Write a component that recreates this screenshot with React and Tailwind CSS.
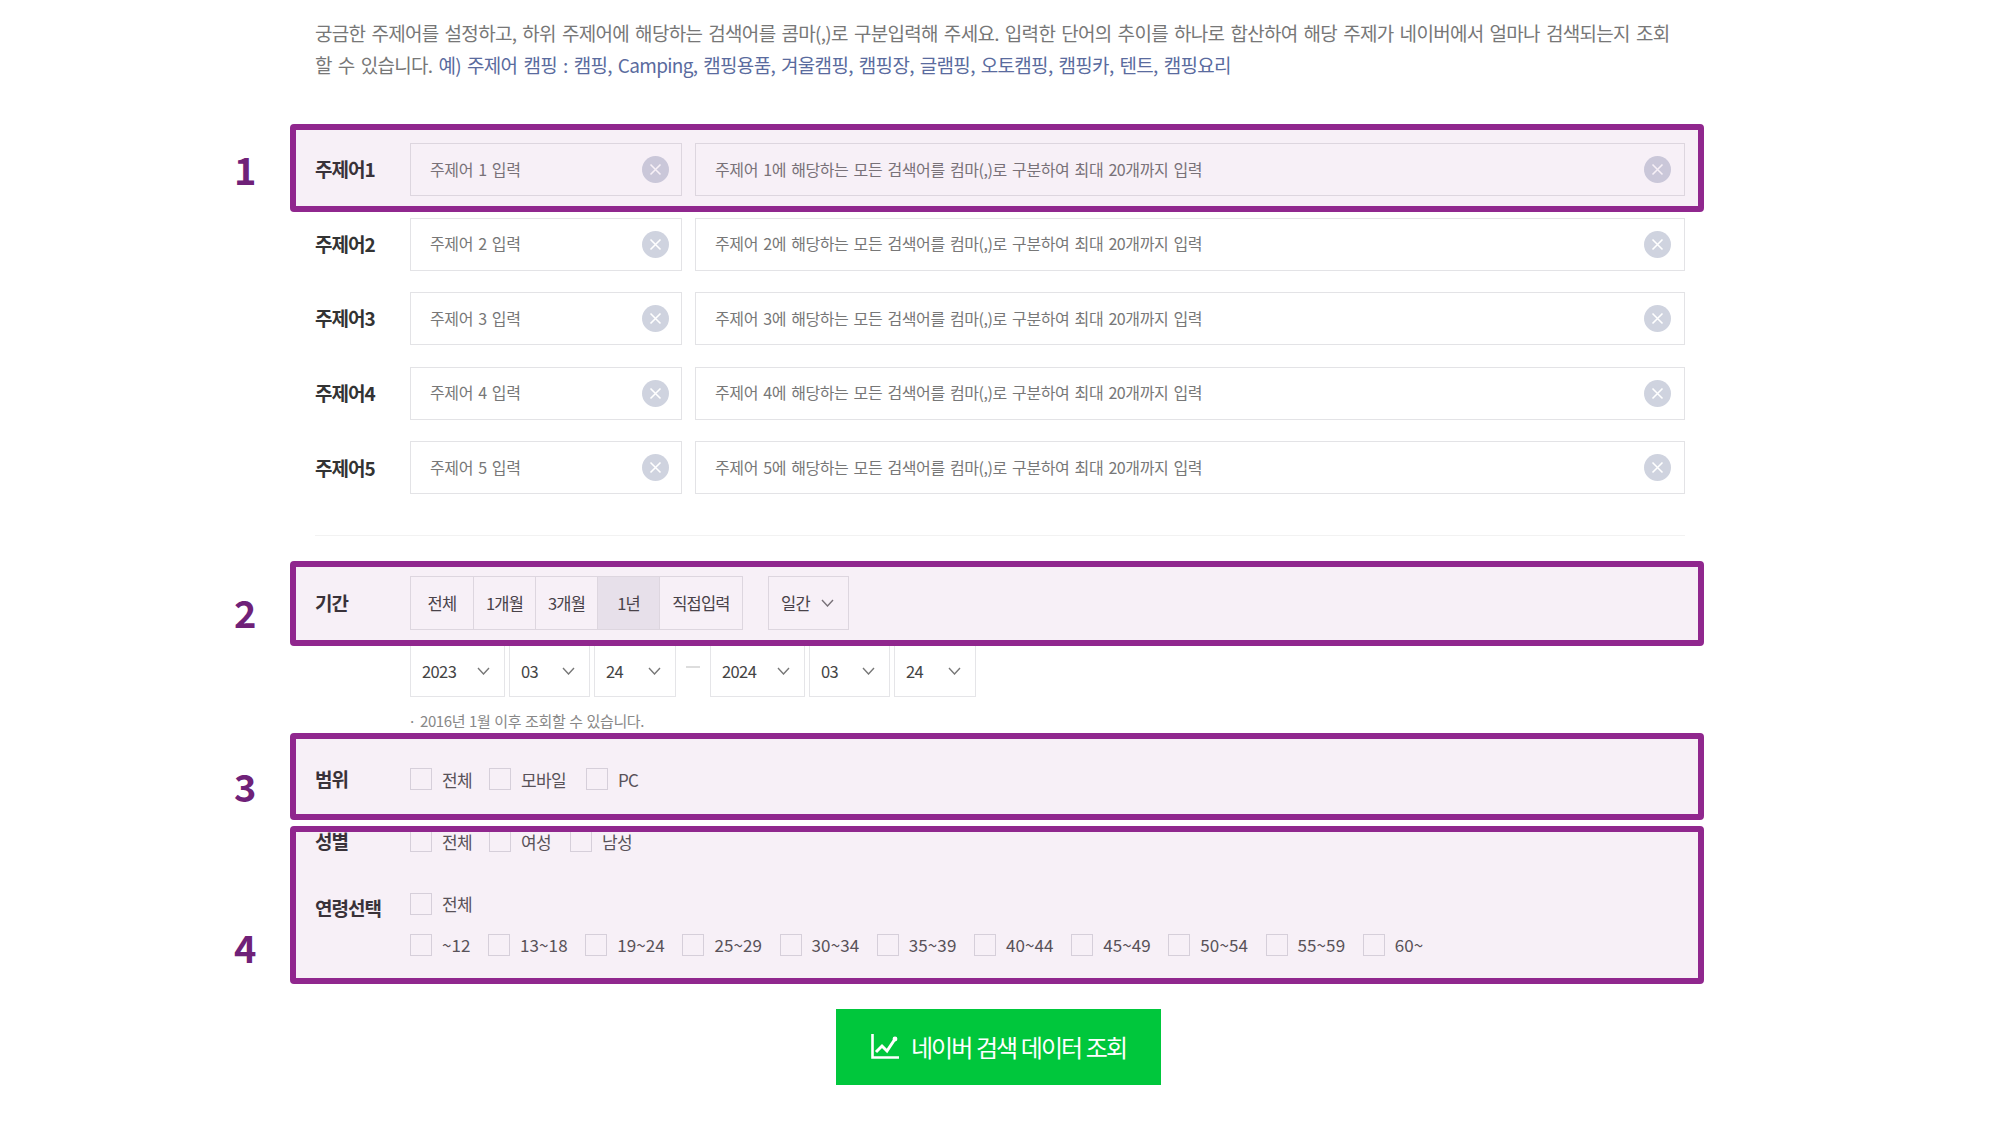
import React from 'react';

const ClearIcon = () => (
    <svg width="27" height="27" viewBox="0 0 27 27" className="shrink-0">
        <circle cx="13.5" cy="13.5" r="13.5" fill="#cfd3df" />
        <path d="M8.5 8.5l10 10M18.5 8.5l-10 10" stroke="#fff" strokeWidth="1.6" fill="none" />
    </svg>
);

const Chevron = () => (
    <svg width="13" height="8" viewBox="0 0 13 8" className="shrink-0">
        <path d="M1 1l5.5 6L12 1" stroke="#777" strokeWidth="1.4" fill="none" />
    </svg>
);

const Checkbox = ({ label, className = '', labelClass = 'tracking-[-0.7px]' }) => (
    <div className={`flex items-center ${className}`}>
        <span className="w-[22px] h-[22px] border border-[#dcdce0] bg-white/40 shrink-0"></span>
        <span className={`ml-[10px] text-[17px] text-[#555] whitespace-nowrap ${labelClass}`}>{label}</span>
    </div>
);

const Select = ({ value, width }) => (
    <div className={`h-full border border-[#e5e5e8] flex items-center justify-between pl-[11px] pr-[14px] text-[16.5px] tracking-[-0.6px] text-[#444] ${width}`}>
        <span>{value}</span>
        <Chevron />
    </div>
);

const KeywordRow = ({ n }) => (
    <div className="flex h-[53px] items-stretch">
        <div className="w-[95px] flex items-center text-[19px] font-bold tracking-[-1px] text-[#333]">주제어{n}</div>
        <div className="w-[272px] border border-[#e3e3e6] flex items-center justify-between pl-[19px] pr-[12px]">
            <span className="pb-[2px] text-[16px] tracking-[-0.4px] [word-spacing:2px] text-[#777]">주제어 {n} 입력</span>
            <ClearIcon />
        </div>
        <div className="ml-[13px] w-[990px] border border-[#e3e3e6] flex items-center justify-between pl-[19px] pr-[13px]">
            <span className="pb-[2px] text-[16px] tracking-[-0.4px] [word-spacing:2px] text-[#777]">주제어 {n}에 해당하는 모든 검색어를 컴마(,)로 구분하여 최대 20개까지 입력</span>
            <ClearIcon />
        </div>
    </div>
);

const Highlight = ({ num, className, numClass }) => (
    <div className={`absolute left-[290px] w-[1414px] rounded-[4px] border-[6px] border-[#90278e] bg-[#90278e]/[0.07] ${className}`}>
        <span className={`absolute left-[-62px] text-[38px] font-bold leading-none text-[#6f2178] ${numClass}`}>{num}</span>
    </div>
);

const periods = [
    { label: '전체', width: 'w-[62px]' },
    { label: '1개월', width: 'w-[62px]' },
    { label: '3개월', width: 'w-[62px]' },
    { label: '1년', width: 'w-[62px] bg-[#eeeef2]' },
    { label: '직접입력', width: 'w-[83px]' },
];

const ages = ['13~18', '19~24', '25~29', '30~34', '35~39', '40~44', '45~49', '50~54', '55~59', '60~'];

export default function App() {
    return (
        <div className="relative h-[1125px] w-full overflow-hidden bg-white font-['Noto_Sans_CJK_KR','Noto_Sans',sans-serif]">
            <div className="ml-[315px] w-[1370px] pt-[17px]">
                <div className="text-[19px] leading-[32px] tracking-[-0.7px] [word-spacing:2.5px] text-[#777]">
                    <p>궁금한 주제어를 설정하고, 하위 주제어에 해당하는 검색어를 콤마(,)로 구분입력해 주세요. 입력한 단어의 추이를 하나로 합산하여 해당 주제가 네이버에서 얼마나 검색되는지 조회</p>
                    <p>
                        할 수 있습니다.{' '}
                        <span className="text-[#5a6b9e]">예) 주제어 캠핑 : 캠핑, Camping, 캠핑용품, 겨울캠핑, 캠핑장, 글램핑, 오토캠핑, 캠핑카, 텐트, 캠핑요리</span>
                    </p>
                </div>

                <div className="mt-[62px] flex flex-col gap-[21.6px]">
                    {[1, 2, 3, 4, 5].map(n => <KeywordRow key={n} n={n} />)}
                </div>

                <div className="mt-[41px] border-t border-[#f2f2f2]"></div>

                <div className="mt-[40px] flex h-[54px] items-stretch">
                    <div className="w-[95px] flex items-center text-[19px] font-bold tracking-[-1px] text-[#333]">기간</div>
                    <div className="flex border border-[#e3e3e6]">
                        {periods.map((p, i) => (
                            <div key={p.label} className={`flex items-center justify-center text-[16.5px] tracking-[-0.8px] text-[#444] ${p.width} ${i > 0 ? 'border-l border-[#e3e3e6]' : ''}`}>{p.label}</div>
                        ))}
                    </div>
                    <div className="ml-[25px] w-[81px] border border-[#e3e3e6] flex items-center justify-between pl-[12px] pr-[14px] text-[16.5px] tracking-[-0.8px] text-[#444]">
                        <span>일간</span>
                        <Chevron />
                    </div>
                </div>

                <div className="mt-[14px] ml-[95px] flex h-[53px] items-stretch">
                    <Select value="2023" width="w-[95px]" />
                    <Select value="03" width="ml-[4px] w-[81px]" />
                    <Select value="24" width="ml-[4px] w-[82px]" />
                    <div className="mx-[10px] w-[14px] h-[2px] mt-[22px] bg-[#dddddd]"></div>
                    <Select value="2024" width="w-[95px]" />
                    <Select value="03" width="ml-[4px] w-[81px]" />
                    <Select value="24" width="ml-[4px] w-[82px]" />
                </div>

                <p className="mt-[13px] ml-[93px] text-[15px] leading-[22px] tracking-[-0.4px] [word-spacing:1px] text-[#888]">· 2016년 1월 이후 조회할 수 있습니다.</p>

                <div className="mt-[36px] flex items-center h-[22px]">
                    <div className="w-[95px] text-[19px] font-bold tracking-[-1px] text-[#333]">범위</div>
                    <Checkbox label="전체" className="w-[79px]" />
                    <Checkbox label="모바일" className="w-[97px]" />
                    <Checkbox label="PC" />
                </div>

                <div className="mt-[40px] flex items-center h-[22px]">
                    <div className="w-[95px] text-[19px] font-bold tracking-[-1px] text-[#333]">성별</div>
                    <Checkbox label="전체" className="w-[79px]" />
                    <Checkbox label="여성" className="w-[81px]" />
                    <Checkbox label="남성" />
                </div>

                <div className="mt-[39px] flex">
                    <div className="w-[95px] pt-[3px] text-[19px] font-bold tracking-[-1px] text-[#333]">연령선택</div>
                    <div className="flex flex-col gap-[17px]">
                        <Checkbox label="전체" />
                        <div className="flex h-[22px]">
                            <Checkbox label="~12" className="w-[78px]" labelClass="tracking-[0.1px]" />
                            {ages.map(a => <Checkbox key={a} label={a} className="w-[97.2px]" labelClass="tracking-[0.1px]" />)}
                        </div>
                    </div>
                </div>

                <div className="mt-[53px] ml-[521px]">
                    <button className="w-[325px] h-[76px] bg-[#00c73c] flex items-center justify-center gap-[12px] text-white text-[24px] tracking-[-1.9px] [word-spacing:1px]">
                        <svg width="28" height="25" viewBox="0 0 28 25" className="shrink-0">
                            <path d="M1.5 0v23.5H28" stroke="#fff" strokeWidth="2.6" fill="none" />
                            <path d="M5 18l6-6 5 5 8-12" stroke="#fff" strokeWidth="3" fill="none" />
                            <circle cx="24" cy="5" r="2.4" fill="#fff" />
                        </svg>
                        <span>네이버 검색 데이터 조회</span>
                    </button>
                </div>
            </div>

            {/* annotation boxes drawn over the form */}
            <Highlight num="1" className="top-[124px] h-[88px]" numClass="top-[20px]" />
            <Highlight num="2" className="top-[561px] h-[85px]" numClass="top-[26px]" />
            <Highlight num="3" className="top-[733px] h-[87px]" numClass="top-[28px]" />
            <Highlight num="4" className="top-[826px] h-[158px]" numClass="top-[96px]" />
        </div>
    );
}
